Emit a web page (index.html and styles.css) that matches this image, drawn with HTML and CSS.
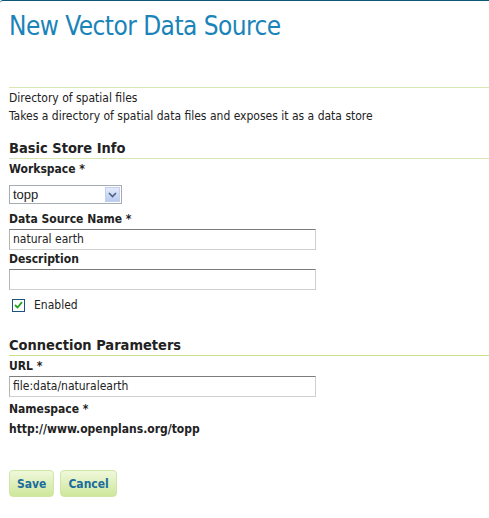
FILE: index.html
```
<!DOCTYPE html>
<html>
<head>
<meta charset="utf-8">
<link rel="stylesheet" href="styles.css">
</head>
<body>
<div class="page">
  <h1 class="title">New Vector Data Source</h1>
  <div class="intro">
    <div class="line">Directory of spatial files</div>
    <div class="line">Takes a directory of spatial data files and exposes it as a data store</div>
  </div>
  <h2 class="section">Basic Store Info</h2>
  <div class="fields">
    <label class="lbl">Workspace *</label>
    <div class="select">
      <span class="sel-text">topp</span>
      <span class="sel-btn"><svg width="9" height="6" viewBox="0 0 9 6"><path d="M1 1 L4.5 4.5 L8 1" fill="none" stroke="#4d6185" stroke-width="1.6"/></svg></span>
    </div>
    <label class="lbl lbl-name">Data Source Name *</label>
    <div class="input">natural earth</div>
    <label class="lbl lbl-desc">Description</label>
    <div class="input"></div>
    <div class="check-row">
      <span class="checkbox"><svg width="9" height="8" viewBox="0 0 9 8"><path d="M1 4 L3.5 6.5 L8 1.2" fill="none" stroke="#21a121" stroke-width="1.8"/></svg></span>
      <span class="check-label">Enabled</span>
    </div>
  </div>
  <h2 class="section section2">Connection Parameters</h2>
  <div class="fields">
    <label class="lbl">URL *</label>
    <div class="input">file:data/naturalearth</div>
    <label class="lbl lbl-ns">Namespace *</label>
    <div class="ns">http://www.openplans.org/topp</div>
  </div>
  <div class="buttons">
    <span class="btn">Save</span>
    <span class="btn">Cancel</span>
  </div>
</div>
</body>
</html>
```

FILE: styles.css
```
html, body {
  margin: 0;
  padding: 0;
  background: #ffffff;
}
body {
  font-family: "DejaVu Sans Condensed", "DejaVu Sans", Verdana, sans-serif;
  font-size: 12px;
  color: #222;
}
.page {
  border-top: 1px solid #0b5776;
  border-top-left-radius: 3px;
  padding: 0 0 0 9px;
  height: 517px;
}
.title {
  margin: 0;
  padding-top: 9px;
  font-family: "DejaVu Sans Condensed", "DejaVu Sans", sans-serif;
  font-weight: normal;
  font-size: 26px;
  letter-spacing: -0.55px;
  line-height: 32px;
  color: #1a84b8;
  height: 77px;
}
.intro {
  border-top: 1px solid #d6e6b4;
  padding-top: 1px;
  height: 50px;
}
.line {
  line-height: 18px;
  color: #222;
}
.section {
  margin: 0;
  font-size: 14.5px;
  font-weight: bold;
  line-height: 19px;
  color: #222;
  border-bottom: 1px solid #d6e6b4;
  padding-bottom: 0;
}
.section2 {
  margin-top: 24px;
  border-bottom-color: #c6e08e;
}
.fields {
  display: flex;
  flex-direction: column;
  align-items: flex-start;
}
.lbl {
  font-weight: bold;
  line-height: 16px;
  margin-top: 2px;
  color: #222;
}
.select {
  margin-top: 8px;
  width: 108px;
  height: 17px;
  border: 1px solid #a5acb5;
  display: flex;
  align-items: center;
  justify-content: space-between;
  padding-left: 3px;
  box-sizing: content-box;
}
.sel-text {
  font-family: "Liberation Sans", Arial, sans-serif;
  font-size: 13px;
}
.sel-btn {
  width: 15px;
  height: 15px;
  margin-right: 1px;
  background: linear-gradient(#e3ebfb, #b9cbf1);
  border: 1px solid #c2d0ec;
  box-sizing: border-box;
  display: flex;
  align-items: center;
  justify-content: center;
}
.lbl-name { margin-top: 7px; }
.lbl-desc { margin-top: 1px; }
.lbl-ns { margin-top: 4px; }
.input {
  width: 302px;
  height: 19px;
  border: 1px solid #cfcfcf;
  border-top-color: #7c7c7c;
  border-left-color: #b5b5b5;
  padding-left: 3px;
  line-height: 19px;
  color: #222;
  margin-top: 2px;
}
.check-row {
  display: flex;
  align-items: center;
  margin-top: 8px;
  margin-left: 3px;
}
.checkbox {
  width: 11px;
  height: 11px;
  border: 1px solid #1c5180;
  display: flex;
  align-items: center;
  justify-content: center;
  background: #fff;
}
.check-label {
  margin-left: 9px;
  line-height: 14px;
}
.ns {
  font-weight: bold;
  margin-top: 4px;
  line-height: 16px;
}
.buttons {
  display: flex;
  gap: 6px;
  margin-top: 33px;
}
.btn {
  display: inline-flex;
  align-items: center;
  justify-content: center;
  height: 27px;
  padding: 0 7px;
  box-sizing: border-box;
  border: 1px solid #cfe6a6;
  border-radius: 4px;
  background: linear-gradient(#f0f8dc, #cde79a);
  color: #1b6c9c;
  font-weight: bold;
  font-size: 12px;
}
```
